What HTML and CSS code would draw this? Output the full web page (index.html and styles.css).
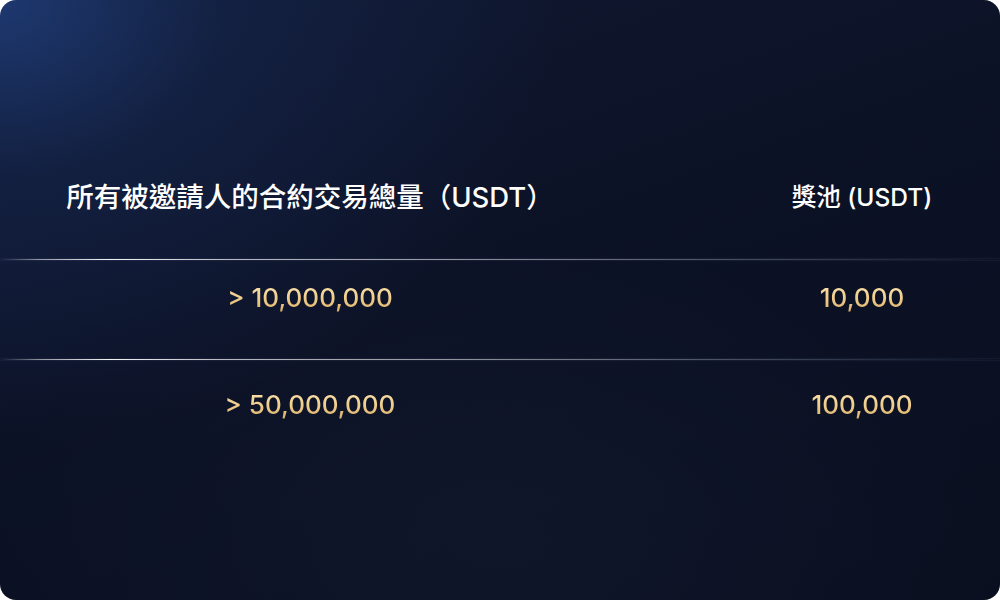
FILE: index.html
```html
<!DOCTYPE html>
<html lang="zh-Hant">
<head>
<meta charset="utf-8">
<link rel="stylesheet" href="styles.css">
</head>
<body>
<div class="card">
  <div class="row head">
    <div class="col left">所有被邀請人的合約交易總量（USDT）</div>
    <div class="col right">獎池 (USDT)</div>
  </div>
  <div class="divider d1"></div>
  <div class="row data r1">
    <div class="col left"><span class="gold">&gt; 10,000,000</span></div>
    <div class="col right"><span class="gold">10,000</span></div>
  </div>
  <div class="divider"></div>
  <div class="row data r2">
    <div class="col left"><span class="gold">&gt; 50,000,000</span></div>
    <div class="col right"><span class="gold">100,000</span></div>
  </div>
</div>
</body>
</html>
```
FILE: styles.css
```css
html, body {
  margin: 0;
  padding: 0;
  background: #ffffff;
}
.card {
  width: 1000px;
  height: 600px;
  box-sizing: border-box;
  border-radius: 16px;
  overflow: hidden;
  padding-top: 165px;
  background:
    radial-gradient(ellipse 560px 440px at 0% 0%, rgba(30, 58, 115, 0.95) 0%, rgba(22, 40, 82, 0.5) 40%, rgba(14, 22, 45, 0) 100%),
    radial-gradient(ellipse 500px 300px at 50% 90%, rgba(20, 28, 50, 0.5) 0%, rgba(12, 17, 33, 0) 100%),
    linear-gradient(160deg, #111a33 0%, #0c1226 45%, #0a0f1f 100%);
  font-family: Inter, "Noto Sans CJK TC", sans-serif;
}
.row {
  display: grid;
  grid-template-columns: 620px 1fr;
}
.col {
  text-align: center;
  white-space: nowrap;
}
.col.right {
  padding-left: 104px;
}
.head {
  height: 60px;
  align-items: center;
  color: #ffffff;
  font-weight: 500;
}
.head .left {
  font-size: 27.5px;
}
.head .right {
  font-size: 24.5px;
}
.d1 {
  margin-top: 34px;
}
.divider {
  height: 1px;
  background: linear-gradient(90deg,
    rgba(255,255,255,0) 0%,
    rgba(255,255,255,0.55) 4%,
    rgba(255,255,255,0.95) 11%,
    rgba(255,255,255,0.7) 22%,
    rgba(255,255,255,0.55) 45%,
    rgba(200,210,230,0.35) 70%,
    rgba(160,175,210,0.15) 90%,
    rgba(255,255,255,0) 100%);
  box-shadow: 0 0 2px rgba(200,215,255,0.25);
}
.data {
  line-height: 30px;
  font-family: Inter, "Noto Sans", sans-serif;
  font-size: 26px;
  font-weight: 500;
}
.r1 {
  margin-top: 23px;
  margin-bottom: 46px;
}
.r2 {
  margin-top: 30px;
}
.gold {
  background: linear-gradient(180deg, #fbe4b1 0%, #efcc8a 55%, #d9ad68 100%);
  -webkit-background-clip: text;
  background-clip: text;
  color: transparent;
}
```
